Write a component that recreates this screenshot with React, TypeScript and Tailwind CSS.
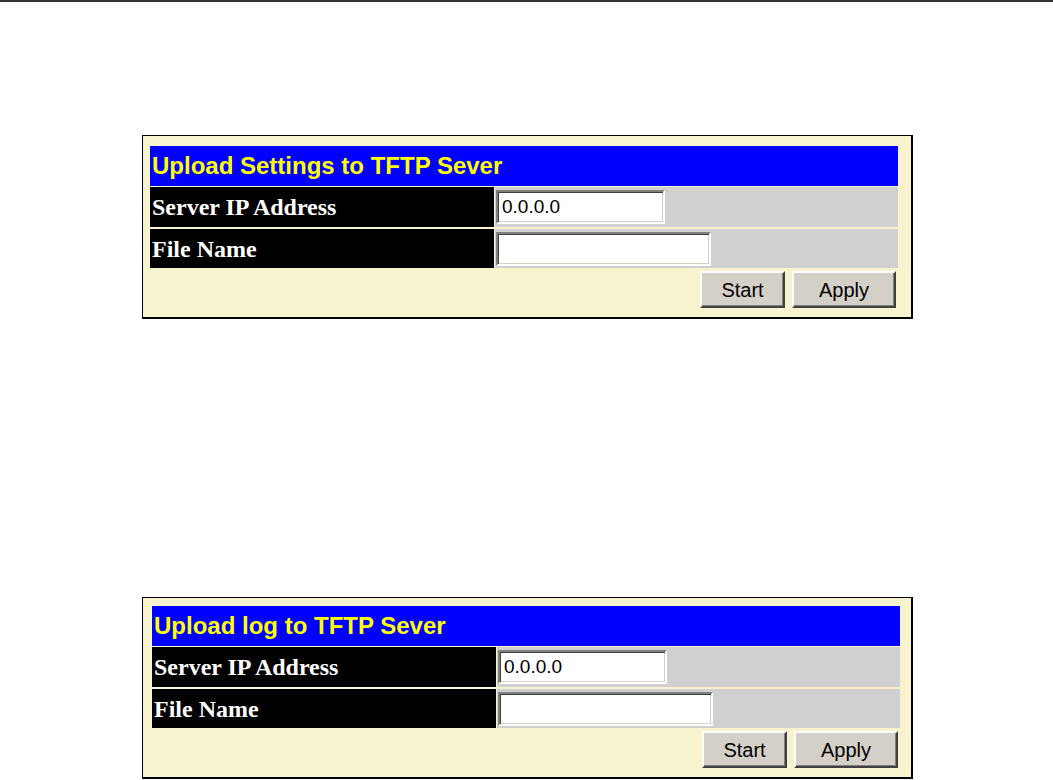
const sans = "font-['Liberation_Sans',Arial,sans-serif]";
const serif = "font-['Liberation_Serif','Times_New_Roman',serif]";

type PanelProps = {
  title: string;
  compact?: boolean;
};

function Field({ width, value }: { width: string; value: string }) {
  return (
    <div
      className={`${width} h-[34px] flex items-center border-2 border-t-[#808080] border-l-[#808080] border-r-white border-b-white bg-white pl-[4px] text-[19px] text-black shadow-[inset_1px_1px_0_#404040,inset_-1px_-1px_0_#d4d0c8] ${sans}`}
    >
      {value}
    </div>
  );
}

function Button({ label, width }: { label: string; width: string }) {
  return (
    <button
      className={`${width} h-[37px] border-2 border-t-white border-l-white border-r-[#404040] border-b-[#404040] bg-[#d4d0c8] text-[20px] leading-none text-black shadow-[inset_-1px_-1px_0_#808080] ${sans}`}
    >
      {label}
    </button>
  );
}

function Panel({ title, compact }: PanelProps) {
  return (
    <div
      className={`w-[771px] border-t border-l border-r-2 border-b-2 border-black bg-[#f7f3cf] ${
        compact ? "pt-[8px] pl-[9px]" : "pt-[10px] pl-[7px]"
      } pb-[9px]`}
    >
      <div className="w-[748px] flex flex-col">
        <div
          className={`h-[40px] flex items-center bg-[#0000ff] pl-[2px] text-[24px] font-bold text-[#ffff00] ${sans}`}
        >
          {title}
        </div>

        <div className="mt-[1px] h-[40px] flex gap-[1px]">
          <div
            className={`w-[344px] flex items-center bg-black pl-[2px] text-[24px] font-bold text-white ${serif}`}
          >
            Server IP Address
          </div>
          <div className="flex-1 flex items-center bg-[#d0d0d0] pl-[1px]">
            <Field width="w-[169px]" value="0.0.0.0" />
          </div>
        </div>

        <div className="mt-[2px] h-[39px] flex gap-[1px]">
          <div
            className={`w-[344px] flex items-center bg-black pl-[2px] text-[24px] font-bold text-white ${serif}`}
          >
            File Name
          </div>
          <div className="flex-1 flex items-center bg-[#d0d0d0] pl-[1px]">
            <Field width="w-[215px]" value="" />
          </div>
        </div>

        <div className="mt-[3px] flex justify-end gap-[7px] pr-[2px]">
          <Button label="Start" width="w-[85px]" />
          <Button label="Apply" width="w-[104px]" />
        </div>
      </div>
    </div>
  );
}

export default function App() {
  return (
    <div className="min-h-[780px] w-full bg-white">
      <div className="h-[2px] w-full bg-[#333333]" />
      <div className="ml-[142px] mt-[133px]">
        <Panel title="Upload Settings to TFTP Sever" />
      </div>
      <div className="ml-[142px] mt-[278px]">
        <Panel title="Upload log to TFTP Sever" compact />
      </div>
    </div>
  );
}
